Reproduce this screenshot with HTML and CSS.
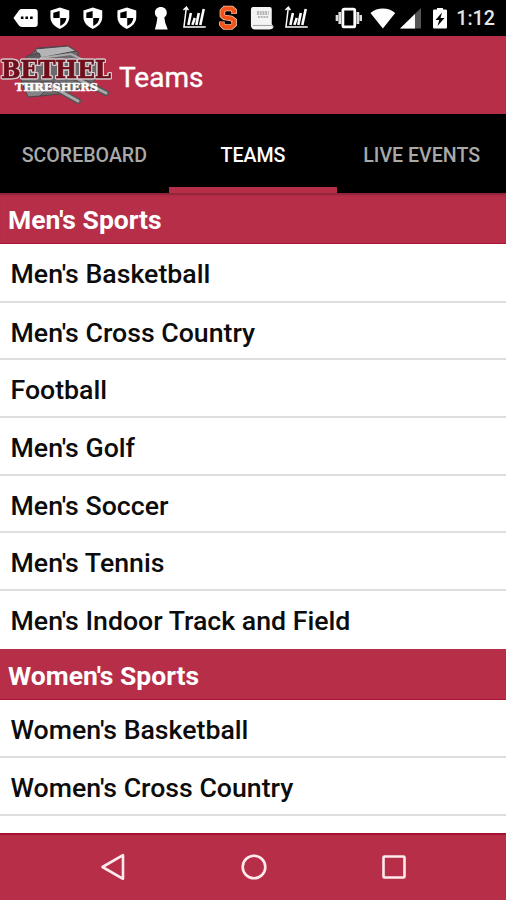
FILE: index.html
```html
<!DOCTYPE html>
<html lang="en">
<head>
    <meta charset="UTF-8">
    <meta name="viewport" content="width=device-width, initial-scale=1.0">
    <title>Teams</title>
    <link rel="stylesheet" href="styles.css">
</head>
<body>
    <svg width="0" height="0" class="defs">
        <symbol id="shield" viewBox="0 0 34 36">
            <path d="M17 7.5 L26.5 10.5 V17 C26.5 23 22 27 17 29 C12 27 7.5 23 7.5 17 V10.5 Z" fill="#fff"/>
            <path d="M16.8 11 V18 H10.4 V12.8 Z M17.4 18 H23.6 C23 22 21 24.5 17.4 26 Z" fill="#000"/>
        </symbol>
        <symbol id="chart" viewBox="0 0 34 36">
            <path d="M9.5 7 L7 27 H29 M6.5 10 L9.5 7 L11.5 10" fill="none" stroke="#fff" stroke-width="1.5"/>
            <path d="M11.5 25 L14 13 M15.5 25 L18 18 M19.5 25 L22 13 M23.5 25 L27 9" fill="none" stroke="#fff" stroke-width="2.6"/>
        </symbol>
    </svg>

    <div class="status-bar">
        <div class="notifications">
            <svg viewBox="0 0 34 36">
                <path d="M4.5 18 L10 10.5 Q11 9 13 9 H26 Q29 9 29 12 V24 Q29 27 26 27 H13 Q11 27 10 25.5 Z" fill="#fff"/>
                <path d="M12 16.5h2.6v2.6H12z M16.6 16.5h2.6v2.6h-2.6z M21.3 16.5h2.6v2.6h-2.6z" fill="#000"/>
            </svg>
            <svg><use href="#shield"/></svg>
            <svg><use href="#shield"/></svg>
            <svg><use href="#shield"/></svg>
            <svg viewBox="0 0 34 36">
                <path d="M17 7 C20.5 7 23 9.5 23 12.5 C23 15 22 16.5 20.5 17.5 L21.5 23 L24 29.5 H11 L12.7 23 L13.5 17.5 C12 16.5 11 15 11 12.5 C11 9.5 13.5 7 17 7 Z" fill="#fff"/>
            </svg>
            <svg><use href="#chart"/></svg>
            <svg viewBox="0 0 34 36">
                <g fill="none">
                    <path d="M23.3 14 V10.5 L21 8.5 H14 L11.5 11 V15.5 L13.5 17.5 L20.5 18.5 L23.3 20.5 V24.5 L20.5 27 H13.5 L11 24.5 V21.5" stroke="#f3c4ad" stroke-width="5.6"/>
                    <path d="M23.3 13.5 V10.5 L21 8.5 H14 L11.5 11 V15.5 L13.5 17.5 L20.5 18.5 L23.3 20.5 V24.5 L20.5 27 H13.5 L11 24.5 V22" stroke="#f25318" stroke-width="4"/>
                </g>
            </svg>
            <svg viewBox="0 0 34 36">
                <path d="M8 7 H25 Q27 7 27 9 V24 L29 27 Q28 29.5 25 29.5 H10 Q6 29.5 6 25 V10 Q6 7 8 7 Z" fill="#f4f4f4"/>
                <path d="M8 25.5 H27 L28 27" fill="none" stroke="#888" stroke-width="0.8"/>
                <path d="M12 12 H24 M12 14 H24 M13 17 H24" stroke="#777" stroke-width="1.1" stroke-dasharray="2 0.8"/>
            </svg>
            <svg><use href="#chart"/></svg>
        </div>
        <div class="system">
            <svg viewBox="0 0 34 36">
                <path d="M12.5 9 H21.5 Q23 9 23 10.5 V25.5 Q23 27 21.5 27 H12.5 Q11 27 11 25.5 V10.5 Q11 9 12.5 9 Z" fill="none" stroke="#fff" stroke-width="2.8"/>
                <path d="M7.9 12 V24 M26.1 12 V24" stroke="#ddd" stroke-width="2.8"/>
                <path d="M5 15 V21 M29 15 V21" stroke="#ddd" stroke-width="2.6"/>
            </svg>
            <svg viewBox="0 0 34 36">
                <path d="M17 28.5 L4.5 13 Q10 8.5 17 8.5 Q24 8.5 29.5 13 Z" fill="#fff"/>
            </svg>
            <svg class="signal" viewBox="0 0 22 36">
                <path d="M21 8 V28.5 H0 Z" fill="#555"/>
                <path d="M15 14 V28.5 H0 Z" fill="#fff"/>
            </svg>
            <svg class="battery" viewBox="0 0 16 36">
                <path d="M5 8 H11 V9.5 H14 Q15 9.5 15 11 V27 Q15 28.5 14 28.5 H2 Q1 28.5 1 27 V11 Q1 9.5 2 9.5 H5 Z" fill="#fff"/>
                <path d="M10 12.5 L3.5 20 H7.3 L5.5 26 L12.5 18 H8.5 Z" fill="#000"/>
            </svg>
            <span class="clock">1:12</span>
        </div>
    </div>

    <header class="app-bar">
        <svg class="logo" viewBox="0 0 114 78">
            <g stroke="#4a4548" stroke-width="1">
                <path d="M29 20 L38 12 L66 10 L78 16 V22 L94 24 L101 36 L90 50 L60 58 L40 60 L24 52 L18 34 Z" fill="#6b696c"/>
                <path d="M35 13 L68 10 L76 15 L40 22 Z" fill="#b4b3b5"/>
                <path d="M27 20 L39 17 L43 26 L26 28 Z" fill="#5b595c"/>
                <path d="M22 46 H54 L40 60 L28 61 Z" fill="#858386"/>
                <path d="M51 50 L78 65 M76 42 L106 57" stroke="#565457" stroke-width="6" stroke-linecap="round"/>
                <path d="M51 50 L78 65 M76 42 L106 57" stroke="#a9a7aa" stroke-width="3" stroke-linecap="round"/>
            </g>
            <path d="M40 22 L71 18 L91 28" fill="none" stroke="#aaa" stroke-width="2"/>
            <text class="logo-name" x="1" y="42" textLength="110" lengthAdjust="spacingAndGlyphs">BETHEL</text>
            <text class="logo-sub" x="15" y="54.5" textLength="83" lengthAdjust="spacingAndGlyphs">THRESHERS</text>
        </svg>
        <h1>Teams</h1>
    </header>

    <nav class="tabs">
        <a class="tab">SCOREBOARD</a>
        <a class="tab active">TEAMS</a>
        <a class="tab">LIVE EVENTS</a>
    </nav>

    <main class="team-list">
        <h2>Men's Sports</h2>
        <ul>
            <li>Men's Basketball</li>
            <li>Men's Cross Country</li>
            <li>Football</li>
            <li>Men's Golf</li>
            <li>Men's Soccer</li>
            <li>Men's Tennis</li>
            <li>Men's Indoor Track and Field</li>
        </ul>
        <h2>Women's Sports</h2>
        <ul>
            <li>Women's Basketball</li>
            <li class="ruled">Women's Cross Country</li>
        </ul>
    </main>

    <footer class="nav-bar">
        <svg viewBox="0 0 28 28"><path d="M3.5 14 L24 2.2 V25.8 Z"/></svg>
        <svg viewBox="0 0 28 28"><circle cx="14" cy="14" r="11.3"/></svg>
        <svg viewBox="0 0 28 28"><rect x="3.5" y="3.5" width="21" height="21" rx="1"/></svg>
    </footer>
</body>
</html>
```

FILE: styles.css
```css
* {
    box-sizing: border-box;
}
body {
    margin: 0;
    height: 900px;
    display: flex;
    flex-direction: column;
    overflow: hidden;
    background: #fff;
    font-family: Roboto, sans-serif;
}
h1, h2, ul {
    margin: 0;
    padding: 0;
}
.defs {
    display: none;
}
.status-bar {
    display: flex;
    justify-content: space-between;
    height: 36px;
    padding: 0 11px 0 9px;
    background: #000;
}
.notifications, .system {
    display: flex;
    align-items: center;
}
.status-bar svg {
    width: 33.7px;
    height: 36px;
}
.status-bar .signal {
    width: 22px;
    margin: 0 10px 0 1px;
}
.status-bar .battery {
    width: 16px;
    margin-right: 8px;
}
.clock {
    padding-top: 2px;
    color: #e6e6e6;
    font-size: 19.7px;
    font-weight: 500;
    line-height: 36px;
}
.app-bar {
    display: flex;
    align-items: center;
    height: 78px;
    background: #b72e48;
}
.logo {
    width: 114px;
    height: 78px;
    margin-right: 5px;
}
.logo-name {
    font-family: "DejaVu Serif", serif;
    font-size: 24px;
    font-weight: bold;
    fill: #6f0f1b;
    stroke: #6f0f1b;
    stroke-width: 0.7px;
    filter: drop-shadow(1px 0 0 #d8d0d3) drop-shadow(-1px 0 0 #d8d0d3) drop-shadow(0 1px 0 #d8d0d3) drop-shadow(0 -1px 0 #d8d0d3);
}
.logo-sub {
    font-family: "DejaVu Serif", serif;
    font-size: 11px;
    font-weight: bold;
    fill: #fff;
    stroke: #fff;
    stroke-width: 0.5px;
}
.app-bar h1 {
    padding-top: 4px;
    color: #fff;
    font-size: 28px;
    font-weight: 400;
    -webkit-text-stroke: 0.4px #fff;
}
.tabs {
    display: grid;
    grid-template-columns: repeat(3, 1fr);
    height: 79px;
    background: #000;
}
.tab {
    height: 79px;
    padding-top: 5px;
    border-bottom: 6px solid transparent;
    color: #a9a9a9;
    font-size: 19.6px;
    font-weight: 500;
    line-height: 74px;
    text-align: center;
}
.tab.active {
    border-bottom-color: #b72e48;
    color: #fff;
}
.team-list {
    flex: 1;
    overflow: hidden;
}
.team-list h2 {
    height: 51px;
    padding-left: 8px;
    background: #b72e48;
    border-bottom: 1px solid #a91536;
    color: #fff;
    font-size: 26.5px;
    font-weight: 700;
    line-height: 54px;
}
.tabs + .team-list h2:first-child {
    box-shadow: inset 0 3px 2px -1px #8e2438;
}
.team-list ul {
    list-style: none;
}
.team-list li {
    height: 57.7px;
    padding-left: 10.5px;
    border-bottom: 2px solid #dedede;
    color: #0c0c0c;
    font-size: 26.7px;
    font-weight: 500;
    line-height: 60px;
}
.team-list li:first-child {
    height: 58.7px;
    line-height: 61px;
}
.team-list li:last-child:not(.ruled) {
    height: 57.5px;
    border-bottom: none;
}
.nav-bar {
    display: flex;
    justify-content: center;
    align-items: center;
    gap: 112.5px;
    height: 67px;
    padding: 0 0 2px 1px;
    background: #b72e48;
    border-top: 2px solid #a50f30;
}
.nav-bar svg {
    width: 28px;
    height: 28px;
    fill: none;
    stroke: #fdeaec;
    stroke-width: 2.6px;
    stroke-linejoin: round;
}
```
